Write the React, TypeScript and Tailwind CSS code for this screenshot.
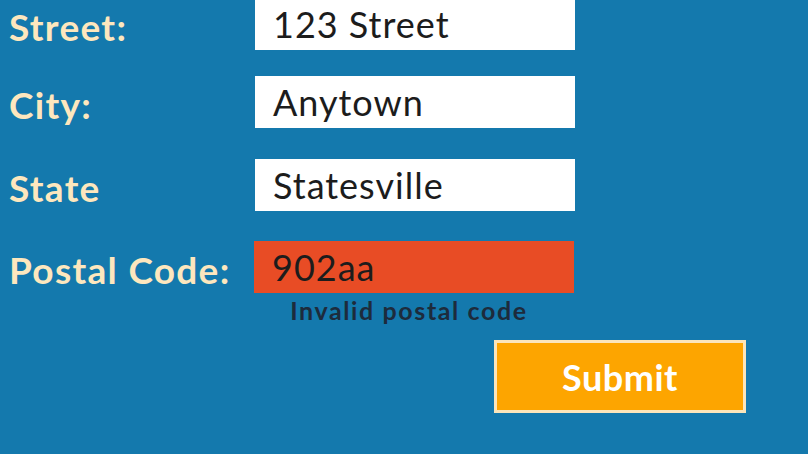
const FIELDS = [
  { label: "Street:", value: "123 Street", mt: "mt-[-2px]" },
  { label: "City:", value: "Anytown", mt: "mt-[26px]" },
  { label: "State", value: "Statesville", mt: "mt-[31px]" },
];

const font = { fontFamily: 'Lato, "Noto Sans", sans-serif' };

export default function App() {
  return (
    <div className="w-[808px] h-[454px] overflow-hidden bg-[#1479ad]" style={font}>
      {FIELDS.map(({ label, value, mt }) => (
        <div key={label} className={`flex items-center ${mt}`}>
          <div className="w-[255px] pl-[9px] pt-[4px] text-[37px] font-bold tracking-[1.3px] text-[#fde7be] leading-none">
            {label}
          </div>
          <div className="w-[320px] h-[52px] bg-white flex items-center pl-[18px] text-[36px] tracking-[1px] text-[#1c1c1c] leading-none">
            {value}
          </div>
        </div>
      ))}

      {/* postal code with error */}
      <div className="flex mt-[30px]">
        <div className="w-[254px] h-[52px] pl-[9px] pt-[4px] flex items-center text-[37px] font-bold tracking-[1.3px] text-[#fde7be] leading-none">
          Postal Code:
        </div>
        <div className="flex flex-col">
          <div className="w-[320px] h-[52px] bg-[#e84c25] flex items-center pl-[18px] text-[36px] tracking-[1px] text-[#1c1c1c] leading-none">
            902aa
          </div>
          <div className="w-[320px] pr-[10px] pt-[5px] text-center text-[25px] font-bold tracking-[1.6px] text-[#1d2b3c] leading-none">
            Invalid postal code
          </div>
        </div>
      </div>

      <div className="flex mt-[17px] pl-[494px]">
        <button className="w-[252px] h-[73px] border-[3px] border-[#fbe5bb] bg-[#fda500] text-white text-[36px] font-bold tracking-[0.5px] leading-none">
          Submit
        </button>
      </div>
    </div>
  );
}
